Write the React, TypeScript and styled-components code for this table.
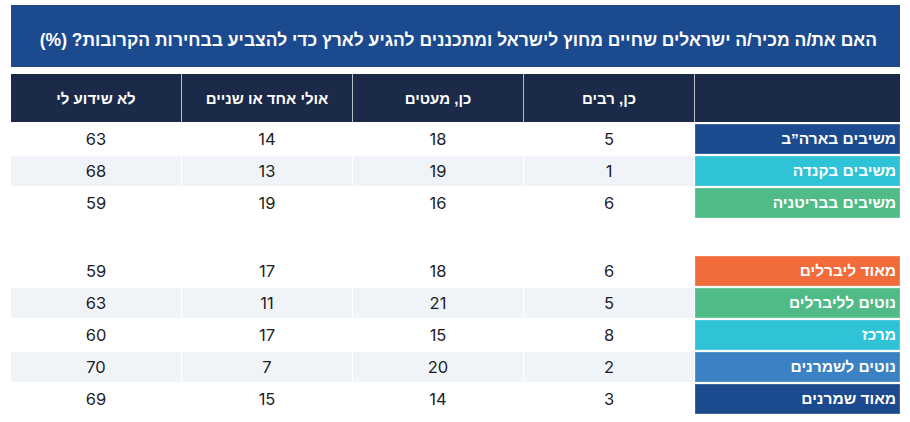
import { Fragment } from 'react';
import styled, { createGlobalStyle } from 'styled-components';

const GlobalStyle = createGlobalStyle`
  body {
    margin: 0;
    background: #ffffff;
  }
`;

const Page = styled.div`
  width: 910px;
  box-sizing: border-box;
  padding: 5px 10px 0 11px;
  direction: rtl;
`;

const TitleBar = styled.div`
  height: 62px;
  box-sizing: border-box;
  background: #1c4a8e;
  color: #ffffff;
  display: flex;
  align-items: center;
  padding: 8px 23px 0 10px;
  white-space: nowrap;
  font-family: 'Liberation Sans', 'DejaVu Sans', sans-serif;
  font-weight: 700;
  font-size: 17.5px;
`;

const Table = styled.div`
  margin-top: 7px;
  display: flex;
  flex-direction: column;
  gap: 2px;
`;

const HeaderRow = styled.div`
  display: grid;
  grid-template-columns: 205px repeat(4, 170px);
  column-gap: 1px;
  height: 48px;
  background: #b7bfcc;
`;

const HeaderCell = styled.div`
  background: #1c2a4a;
  color: #ffffff;
  display: flex;
  align-items: center;
  justify-content: center;
  font-family: 'Liberation Sans', 'DejaVu Sans', sans-serif;
  font-weight: 700;
  font-size: 15px;
`;

const Row = styled.div`
  display: grid;
  grid-template-columns: 205px repeat(4, 170px);
  column-gap: 1px;
  height: 30px;
`;

const Spacer = styled.div`
  height: 34px;
`;

const Label = styled.div<{ $color: string }>`
  background: ${(p) => p.$color};
  color: #ffffff;
  display: flex;
  align-items: center;
  padding-right: 4px;
  font-family: 'Liberation Sans', 'DejaVu Sans', sans-serif;
  font-weight: 700;
  font-size: 15.5px;
  box-shadow: inset 0 0 0 1px rgba(255, 255, 255, 0.15);
`;

const Value = styled.div<{ $striped: boolean }>`
  background: ${(p) => (p.$striped ? '#f0f4f9' : '#ffffff')};
  color: #1d1d1f;
  display: flex;
  align-items: center;
  justify-content: center;
  font-family: Inter, 'Open Sans', sans-serif;
  font-size: 16.5px;
`;

const columns = ['כן, רבים', 'כן, מעטים', 'אולי אחד או שניים', 'לא שידוע לי'];

const groups = [
  [
    { label: 'משיבים בארה”ב', color: '#1c4a8e', values: [5, 18, 14, 63] },
    { label: 'משיבים בקנדה', color: '#2ec3d7', values: [1, 19, 13, 68] },
    { label: 'משיבים בבריטניה', color: '#50bb86', values: [6, 16, 19, 59] },
  ],
  [
    { label: 'מאוד ליברלים', color: '#f26b3a', values: [6, 18, 17, 59] },
    { label: 'נוטים לליברלים', color: '#50bb86', values: [5, 21, 11, 63] },
    { label: 'מרכז', color: '#2ec3d7', values: [8, 15, 17, 60] },
    { label: 'נוטים לשמרנים', color: '#3a82c4', values: [2, 20, 7, 70] },
    { label: 'מאוד שמרנים', color: '#1c4a8e', values: [3, 14, 15, 69] },
  ],
];

const App = () => (
  <>
    <GlobalStyle />
    <Page>
      <TitleBar>
        האם את/ה מכיר/ה ישראלים שחיים מחוץ לישראל ומתכננים להגיע לארץ כדי להצביע בבחירות הקרובות? (%)
      </TitleBar>
      <Table>
        <HeaderRow>
          <HeaderCell />
          {columns.map((c) => (
            <HeaderCell key={c}>{c}</HeaderCell>
          ))}
        </HeaderRow>
        {groups.map((group, gi) => (
          <Fragment key={`group-${gi}`}>
            {gi > 0 && <Spacer />}
            {group.map((row, ri) => (
              <Row key={row.label}>
                <Label $color={row.color}>{row.label}</Label>
                {row.values.map((v, vi) => (
                  <Value key={vi} $striped={ri % 2 === 1}>
                    {v}
                  </Value>
                ))}
              </Row>
            ))}
          </Fragment>
        ))}
      </Table>
    </Page>
  </>
);

export default App;
